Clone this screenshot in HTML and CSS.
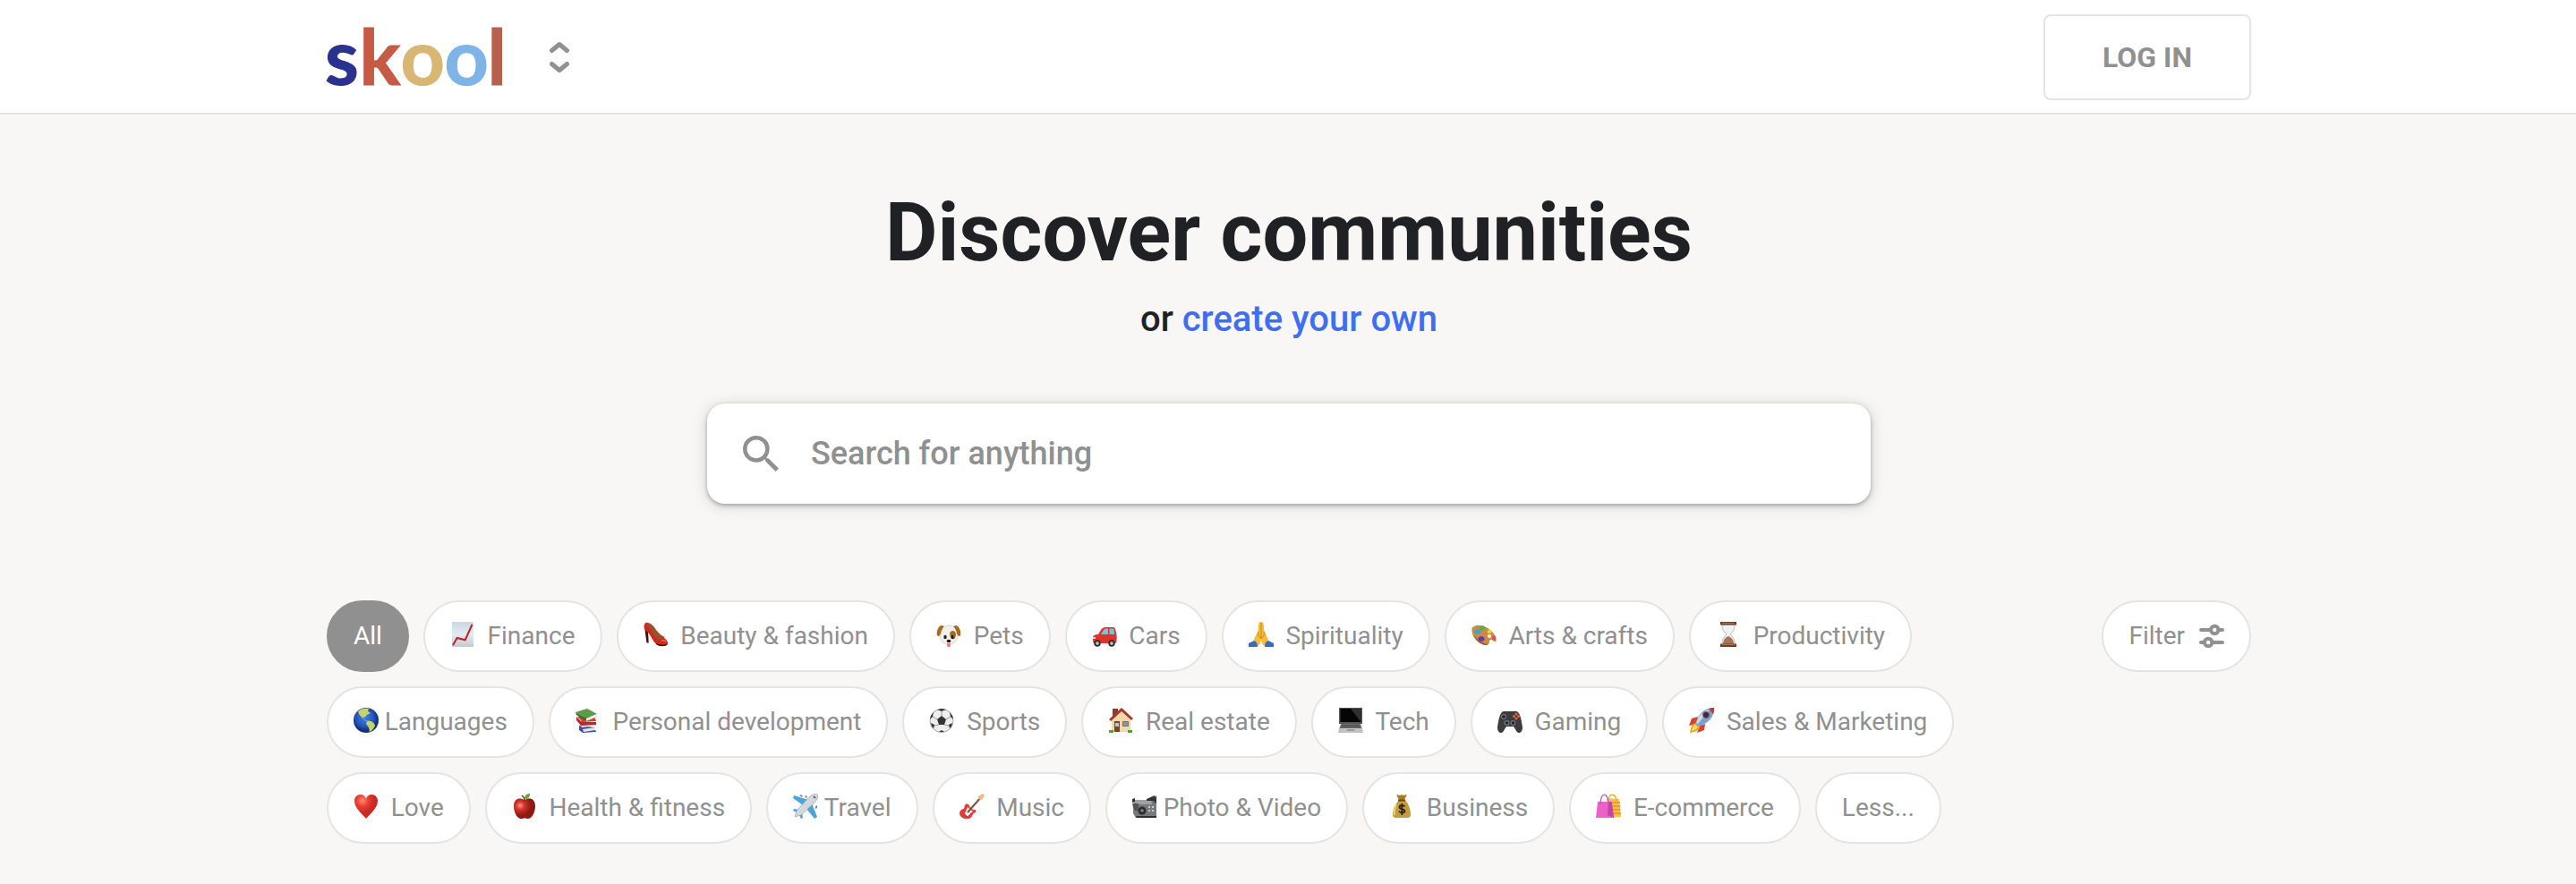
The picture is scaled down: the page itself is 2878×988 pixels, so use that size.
FILE: index.html
```html
<!DOCTYPE html>
<html lang="en">
<head>
<meta charset="utf-8">
<title>Skool: Discover communities</title>
<link rel="stylesheet" href="styles.css">
</head>
<body>
<header class="header">
  <div class="header-inner">
    <div class="brand">
      <svg class="logo" width="200" height="80" viewBox="0 0 200 80" role="img" aria-label="skool">
        <text class="logo-text" y="71"><tspan x="-2" fill="#2a3290" stroke="#2a3290">s</tspan><tspan x="33.500" dx="3" fill="#c55a45" stroke="#c55a45">k</tspan><tspan x="82.500" fill="#d9b673" stroke="#d9b673">o</tspan><tspan x="131.500" fill="#7eb4e8" stroke="#7eb4e8">o</tspan><tspan x="179.500" fill="#b8604e" stroke="#b8604e">l</tspan></text>
      </svg>
      <svg class="switcher" width="24" height="38" viewBox="0 0 24 38"><path d="M3.500 11.500 L12 4.500 L20.500 11.500 M3.500 26.500 L12 33.500 L20.500 26.500"/></svg>
    </div>
    <a class="login">LOG IN</a>
  </div>
</header>
<main class="main">
  <h1 class="title">Discover communities</h1>
  <p class="subtitle">or <a class="link">create your own</a></p>
  <div class="search">
    <svg class="search-icon" width="40" height="40" viewBox="3 3 17.500 17.500"><path d="M15.500 14h-.79l-.28-.27A6.471 6.471 0 0 0 16 9.500 6.500 6.500 0 1 0 9.500 16c1.610 0 3.090-.59 4.230-1.570l.27.28v.79l5 4.990L20.490 19l-4.990-5zm-6 0C7.010 14 5 11.990 5 9.500S7.010 5 9.500 5 14 7.010 14 9.500 11.990 14 9.500 14z"/></svg>
    <span class="placeholder">Search for anything</span>
  </div>
  <div class="filters">
    <div class="chips">
      <a class="chip active">All</a>
      <a class="chip"><svg class="emoji" viewBox="0 0 28 28"><defs><linearGradient id="paper" x2="0" y2="1"><stop stop-color="#c9d8e5"/><stop offset=".5" stop-color="#e3ebf2"/><stop offset="1" stop-color="#c3cad0"/></linearGradient></defs><path fill="url(#paper)" d="M2 0h24v28H2z"/><path d="M3 26l4.700-8 9 2.300L24.500 3" fill="none" stroke="#b8202a" stroke-width="2"/></svg>Finance</a>
      <a class="chip"><svg class="emoji" viewBox="0 0 28 28"><path fill="#9a5228" d="M2 1c5-1 9 3 12 8 3 4 7 7 10 8l-6 4C10 18 6 10 2 1z"/><path fill="#d0281f" d="M2 1c-2 3-2 6 0 9l2 13h1.500L5 12c4 4 6 12 11 14 4 2 10 1 11-1 1-3-3-7-6-8-2 4-6 3-9-1S5 4 2 1z"/><path fill="#3a1210" d="M1.500 9l2 14.500H5.500L5 12zM14 25c4 3 10 3 13 0-4 1-9 1-13-1z"/><path d="M20 21q3-1 5 1" stroke="#ff8d78" fill="none"/></svg>Beauty &amp; fashion</a>
      <a class="chip"><svg class="emoji" viewBox="0 0 28 28"><path fill="#f3f0ea" stroke="#c9c3b8" stroke-width=".6" d="M14 4c7 0 10 5 10 11s-4 10-10 10S4 21 4 15 7 4 14 4z"/><path fill="#a86a22" d="M6 4C2 5 0 11 1 15c1 2 3 1 4-2 1-4 2-6 4-8zM22 4c4 1 6 7 5 11-1 2-3 1-4-2-1-4-2-6-4-8zM16 11c2-2 6-1 6 3s-2 6-4 5-4-6-2-8z"/><ellipse cx="10" cy="17" rx="1.700" ry="2.300" fill="#222"/><ellipse cx="18" cy="17" rx="1.700" ry="2.300" fill="#222"/><ellipse cx="14" cy="21.500" rx="2.300" ry="1.700" fill="#181818"/><path fill="#ee7d93" d="M12 24h4v2c0 3-4 3-4 0z"/></svg>Pets</a>
      <a class="chip"><svg class="emoji" viewBox="0 0 28 28"><path fill="#e0312b" d="M1 18c0-3 3-4 6-4l3-5c1-2 3-3 6-3h8c2 0 3 5 3.500 9 .5 5 0 8-1.500 9H2c-1-1-1-4-1-6z"/><path fill="#79c4d8" d="M10 14l3-5c1-1 2-1.500 4-1.500h1V14zM19.500 7.500H24c.8 2 1.200 4 1.200 6.500h-5.700z"/><circle cx="6" cy="24" r="3.700" fill="#2a2a2c"/><circle cx="22" cy="24" r="3.700" fill="#2a2a2c"/><circle cx="6" cy="24" r="1.900" fill="#b9bcc0"/><circle cx="22" cy="24" r="1.900" fill="#b9bcc0"/><path fill="#ffd9b8" d="M1 17h3v2H1z"/></svg>Cars</a>
      <a class="chip"><svg class="emoji" viewBox="0 0 28 28"><path fill="#f5bd38" d="M13.700 0C11 0 11 3 11 7c0 5-4 8-5 14l4 6c3-1 4-5 4-9 0 4 1 8 4 9l4-6c-1-6-5-9-5-14 0-4 0-7-3.300-7z"/><path d="M14 1v18M11 11c-1 3 0 6 3 7 3-1 4-4 3-7" stroke="#ca8420" fill="none"/><path fill="#3b69bb" d="M0 24l6-3c3 1 4 4 4 7H0zM28 24l-6-3c-3 1-4 4-4 7h10z"/></svg>Spirituality</a>
      <a class="chip"><svg class="emoji" viewBox="0 0 28 28"><path fill="#c98b42" d="M3 5c6-3 14 0 20 6 4 4 6 9 4 11-2 1-4-3-6-2-2 2 0 5-4 6C11 27 3 20 1 13 0 9 0 6 3 5z"/><path fill="#8f5a24" d="M1 13c3 7 10 13 16 13l1-1C11 24 4 18 1 13z"/><circle cx="20" cy="16" r="2" fill="#fff"/><ellipse cx="7" cy="11" rx="3.500" ry="2.500" fill="#35a4d8"/><ellipse cx="12" cy="7" rx="3" ry="2.500" fill="#52b33e"/><ellipse cx="20" cy="11" rx="2.500" ry="2" fill="#f0d23c"/><ellipse cx="25" cy="18" rx="2" ry="2.500" fill="#e84d4b"/><ellipse cx="11" cy="19" rx="3.500" ry="2.800" fill="#6b33b5"/></svg>Arts &amp; crafts</a>
      <a class="chip"><svg class="emoji" viewBox="0 0 28 28"><path fill="#eef0f2" stroke="#b8babd" d="M7 3c0 6 2 8 5 11-3 3-5 5-5 11h14c0-6-2-8-5-11 3-3 5-5 5-11z"/><path fill="#a47558" d="M8 25c0-5 3-8 6-9 3 1 6 4 6 9z"/><path fill="#6b3d25" d="M5 0h18v3.500H5zM5 24.500h18V28H5z"/><path fill="#a97a58" d="M7 1h14v1H7zM7 25h14v1H7z"/></svg>Productivity</a>
      <a class="chip tight"><svg class="emoji" viewBox="0 0 28 28"><defs><radialGradient id="sea" cx=".45" cy=".4"><stop stop-color="#3f7fe6"/><stop offset=".7" stop-color="#2456bd"/><stop offset="1" stop-color="#12307c"/></radialGradient></defs><circle cx="14" cy="14" r="14" fill="url(#sea)"/><path fill="#c4d46a" d="M5 4c3-3 8-4 12-3l-1 3 3 2-4 2-3 3-2-1 1 3 3 2c4-2 10 2 10 5-1 3-4 6-6 7l-1-5-3-4 1-3-5-3-4-5z"/></svg>Languages</a>
      <a class="chip"><svg class="emoji" viewBox="0 0 28 28"><path fill="#3555a8" d="M4 20l17 2 2 5-15 1-4-3z"/><path fill="#e8e6e0" d="M8 24l14-2v3L9 27zM5 18l18-1v3L7 22z"/><path fill="#b92a2c" d="M1 10l5 5 17 1v3L6 20 1 14z"/><path fill="#d63a35" d="M2 10l5 5 16 0-2-5z"/><path fill="#5b9b45" d="M0 5l13-4 11 6-12 5z"/><path fill="#f0efe9" d="M12 12l12-5v3l-12 5z"/><path fill="#34722c" d="M0 5l12 7v3L1 8z"/></svg>Personal development</a>
      <a class="chip"><svg class="emoji" viewBox="0 0 28 28"><circle cx="14" cy="14.500" r="13" fill="#eee" stroke="#a7a7a7"/><path fill="#333" d="M14 9l5 4-2 6h-6l-2-6zM9 2l5 2 5-2-5-1zM1 13l3-3 1-5-3 4zM27 13l-3-3-1-5 3 4zM5 23l1-4-4-2 1 4zM23 23l-1-4 4-2-1 4zM11 27l3-2 3 2z"/><path d="M14 9V4M19 13l5-3M17 19l5 1M11 19l-5 1M9 13l-5-3" stroke="#999"/></svg>Sports</a>
      <a class="chip"><svg class="emoji" viewBox="0 0 28 28"><path fill="#8c3b30" d="M5 1h6v9H5z"/><path fill="#f0d9a6" d="M4 13L15 3l10 10v14H4z"/><path fill="#a43b32" d="M15 0l13 12-2 2L15 4 3 15l-2-2z"/><path fill="#7a4425" d="M7 15h6v12H7z"/><path fill="#a8cde0" d="M8 17h4v4H8z"/><path fill="#5da2dc" stroke="#8b6a45" d="M16.500 15.500h6v5h-6z"/><path fill="#5a9b3b" d="M1 25h5v3H1zM22 25h5v3h-5z"/></svg>Real estate</a>
      <a class="chip"><svg class="emoji" viewBox="0 0 28 28"><path fill="#555" d="M1 0h26v18H1z"/><path fill="#050505" d="M2.500 1h23v15h-23z"/><path fill="#303030" d="M14 1h11.500v15z"/><path fill="#777" d="M3 18h22l2 6H1z"/><path fill="#c3c3c3" d="M1 23h26l1 5H0z"/><path d="M4 19.500h20M3 21.500h22" stroke="#333" stroke-width=".8"/><path fill="#9b9b9b" d="M10 24h8l.5 2h-9z"/></svg>Tech</a>
      <a class="chip"><svg class="emoji" viewBox="0 0 28 28"><path fill="#3b3c3e" d="M7 4h14c4 0 6 10 7 18 0 4-2 6-4 6-3 0-4-5-6-7h-8c-2 2-3 7-6 7-2 0-4-2-4-6C1 14 3 4 7 4z"/><circle cx="7" cy="10" r="3" fill="#6f7275"/><path d="M7 8v4M5 10h4" stroke="#222" stroke-width="1.400"/><circle cx="10.500" cy="17" r="3" fill="#737678"/><circle cx="17.500" cy="17" r="3" fill="#737678"/><circle cx="10.500" cy="17" r="1.700" fill="#222"/><circle cx="17.500" cy="17" r="1.700" fill="#222"/><g fill="#ee623d"><circle cx="21" cy="7" r="1.500"/><circle cx="21" cy="12" r="1.500"/><circle cx="18.500" cy="9.500" r="1.500"/><circle cx="23.500" cy="9.500" r="1.500"/></g></svg>Gaming</a>
      <a class="chip"><svg class="emoji" viewBox="0 0 28 28"><path fill="#d8432c" d="M10 10L3 12l-3 8 8-2zM18 18l-1 7-8 3 3-8z"/><path fill="#f39b26" d="M7 17c-4 1-5 6-6 11 5-1 9-2 11-6z"/><path fill="#ffe35b" d="M7 19c-3 1-3 4-4 7 3-1 5-2 7-4z"/><path fill="#76a2d2" d="M28 0c-7 0-13 3-17 9l-4 8 4 4 8-4c6-4 9-9 9-17z"/><path fill="#c7dbea" d="M23 2c-5 1-9 4-12 8l-3 7 2 1z"/><path fill="#c23a36" d="M28 0c-2 0-4 .3-6 1l5 6c1-2 1-4 1-7z"/><circle cx="19" cy="8" r="3.500" fill="#2a2f46" stroke="#b64a45"/></svg>Sales &amp; Marketing</a>
      <a class="chip"><svg class="emoji" viewBox="0 0 28 28"><defs><radialGradient id="heart" cx=".35" cy=".25"><stop stop-color="#ff8c78"/><stop offset=".5" stop-color="#e83f30"/><stop offset="1" stop-color="#c92b22"/></radialGradient></defs><path fill="url(#heart)" d="M14 28C9 22 1 16 1 8c0-4 3-7 6.500-7C11 1 13 3 14 5.500 15 3 17 1 20.500 1 24 1 27 4 27 8c0 8-8 14-13 20z"/></svg>Love</a>
      <a class="chip"><svg class="emoji" viewBox="0 0 28 28"><defs><radialGradient id="apple" cx=".3" cy=".35"><stop stop-color="#f79a86"/><stop offset=".4" stop-color="#d63429"/><stop offset="1" stop-color="#8e1814"/></radialGradient></defs><path fill="url(#apple)" d="M14 7c5-3 12-2 12 7 0 7-4 14-8 14-2 0-2-.5-4-.5s-2 .5-4 .5c-4 0-8-7-8-14C2 5 9 4 14 7z"/><path d="M14 8q0-4-3-6" stroke="#5b3218" stroke-width="1.300" fill="none"/><path fill="#62a835" d="M14 6c0-4 2-6 6-6 0 4-2 6-6 6z"/></svg>Health &amp; fitness</a>
      <a class="chip tight"><svg class="emoji" viewBox="0 0 28 28"><path fill="#4da3dc" d="M17 7L1 2 0 5l11 8zM21 11l6 15-3 2-9-11zM7 18l-6-1-1 2 6 3zM10 21l1 6-2 1-3-6z"/><path fill="#d4d8dc" stroke="#8e969e" stroke-width=".6" d="M27 1c-2-2-6 0-9 3L4 19l-2 7 7-2L24 10c3-3 5-7 3-9z"/><path fill="#758c9f" d="M7 2l2-1 2 2-1 1zM13 3l2-1 1 2-1 1zM25 14l2-1v3l-2 1z"/><path d="M23 3l2 2" stroke="#345" stroke-width="1.500"/></svg>Travel</a>
      <a class="chip"><svg class="emoji" viewBox="0 0 28 28"><path fill="#e23b38" d="M6 13c2-3 5-1 5 1 1 2 3 4 6 4 2 0 2 3-1 4-2 1-2 6-6 6-5 1-10-2-10-6 0-3 2-4 4-5 2 0 1-2 2-4z"/><path fill="#f3f1ed" d="M9 15l6 5-3 2c-1 2-2 3-4 3l-2-3z"/><path d="M9 21L24 4" stroke="#76503b" stroke-width="2"/><path fill="#f2b687" d="M21 3l5-3 2 2-3 5-4-1z"/><path d="M5 23l3 3" stroke="#666" stroke-width="1.400"/></svg>Music</a>
      <a class="chip tight"><svg class="emoji" viewBox="0 0 28 28"><path fill="#77797b" d="M2 7h20l5 3v17H4l-3-5z"/><path fill="#9fa1a3" d="M2 7h19l1 5H8L1 10z"/><path fill="#323335" d="M16 6l9-4v2l2-2v9l-4-3h-7zM0 6l3-1v4L0 10z"/><path fill="#555" d="M0 11h7v8H2z"/><circle cx="11" cy="19" r="4.500" fill="#2d2e30"/><circle cx="11" cy="19" r="1.800" fill="#858789"/><path fill="#c8cacc" d="M18 14h2v2h-2zM22 14h2v2h-2zM18 18h2v2h-2zM22 18h2v2h-2z"/><path fill="#2f3032" d="M4 25h23v2H5z"/></svg>Photo &amp; Video</a>
      <a class="chip"><svg class="emoji" viewBox="0 0 28 28"><path fill="#c69b3d" d="M11 7h7c4 5 6 10 6 16 0 3-1 4-4 4H8c-3 0-4-1-4-4 0-6 3-11 7-16z"/><path fill="#a87b2b" d="M8 1l4 1 2-1 2 1 4-1-3 6h-6z"/><path d="M10 7.500h8" stroke="#694817" stroke-width="2"/><path d="M8 12q-3 6-2 12" stroke="#f0d274" stroke-width="2" fill="none"/><path d="M17.500 14.500c-1-2-6-2-6 .5 0 3 6 1.500 6 4.500 0 2.500-5.500 2.500-6.500 0M14.300 11v13" stroke="#2b2414" stroke-width="1.800" fill="none"/></svg>Business</a>
      <a class="chip"><svg class="emoji" viewBox="0 0 28 28"><path fill="#f0c53b" d="M12 5l14 1 2 20-12 1z"/><path d="M19 10h8M19 14h8.500M19 18h8.500M19 22h9" stroke="#e18f36" stroke-width="1.400"/><path d="M14 8c0-9 8-9 9 0" stroke="#e1ae35" stroke-width="1.300" fill="none"/><path fill="#eb63c6" d="M2 9h15l3 18-20 0z"/><path fill="#c843a8" d="M14 9h4l2 18-7-3z"/><path d="M5 12c0-15 9-14 9 0" stroke="#b8609f" stroke-width="1.300" fill="none"/></svg>E-commerce</a>
      <a class="chip">Less...</a>
    </div>
    <a class="chip filter">Filter<svg class="filter-icon" width="28" height="28" viewBox="0 0 28 28"><path d="M2 7h10M22 7h4M2 21h3M15 21h11"/><circle cx="17.300" cy="7" r="4.200"/><circle cx="10.200" cy="21" r="4.200"/></svg></a>
  </div>
</main>
</body>
</html>
```
FILE: styles.css
```css
* { box-sizing: border-box; }
body {
  margin: 0;
  min-height: 988px;
  background: #f8f7f5;
  color: #202124;
  font-family: Roboto, "Liberation Sans", sans-serif;
}
.header {
  height: 128px;
  background: #fff;
  border-bottom: 2px solid #e4e4e4;
}
.header-inner {
  width: 2150px;
  height: 100%;
  margin: 0 auto;
  padding: 16px 0 14px;
  display: flex;
  justify-content: space-between;
  align-items: flex-start;
  transform: translateX(1px);
}
.brand {
  display: flex;
  align-items: center;
  gap: 48px;
  padding-top: 8px;
}
.logo { overflow: visible; }
.logo-text {
  font-family: Lato, sans-serif;
  font-weight: 700;
  font-size: 86px;
  stroke-width: 1;
}
.switcher {
  fill: none;
  stroke: #909090;
  stroke-width: 5;
  stroke-linecap: round;
  stroke-linejoin: round;
}
.login {
  width: 232px;
  height: 96px;
  display: flex;
  align-items: center;
  justify-content: center;
  border: 2px solid #e4e4e4;
  border-radius: 8px;
  color: #909090;
  font-size: 32px;
  font-weight: 700;
}
.main {
  width: 2150px;
  margin: 0 auto;
  padding-top: 83px;
  display: flex;
  flex-direction: column;
  align-items: center;
  transform: translateX(1px);
}
.title {
  margin: 0;
  font-size: 90px;
  line-height: 100px;
  font-weight: 700;
}
.subtitle {
  margin: 22px 0 0;
  font-size: 40px;
  line-height: 48px;
  font-weight: 500;
}
.link { color: #3f6ff0; }
.search {
  width: 1300px;
  height: 112px;
  margin-top: 70px;
  padding: 0 40px;
  display: flex;
  align-items: center;
  gap: 36px;
  background: #fff;
  border-radius: 20px;
  box-shadow: 0 2px 4px rgba(60, 64, 67, .36), 0 2px 16px rgba(60, 64, 67, .22);
  color: #909090;
  font-size: 36px;
  font-weight: 500;
}
.search-icon { fill: #909090; }
.filters {
  width: 100%;
  margin-top: 108px;
  display: flex;
  align-items: flex-start;
  gap: 16px;
}
.chips {
  flex: 1;
  display: flex;
  flex-wrap: wrap;
  gap: 16px;
}
.chip {
  height: 80px;
  padding: 0 28px 2px;
  display: flex;
  align-items: center;
  background: #fff;
  border: 2px solid #e4e4e4;
  border-radius: 40px;
  color: #909090;
  font-size: 28px;
  white-space: nowrap;
}
.active {
  background: #909090;
  border-color: #909090;
  color: #fff;
}
.emoji {
  width: 28px;
  height: 28px;
  margin: 0 13.7px 2px 0;
}
.tight .emoji { margin-right: 6.700px; }
.filter-icon {
  margin: 2px 0 0 16px;
  fill: none;
  stroke: #909090;
  stroke-width: 4;
  stroke-linecap: round;
}
```
